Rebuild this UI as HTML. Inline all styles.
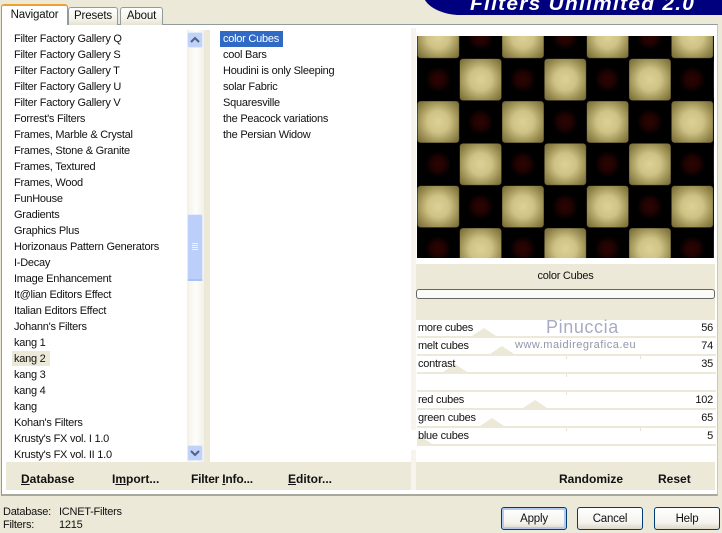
<!DOCTYPE html>
<html><head><meta charset="utf-8">
<style>
html,body{margin:0;padding:0}
body{width:722px;height:532px;position:relative;overflow:hidden;background:#ece9d8;font-family:"Liberation Sans",sans-serif;font-size:11px;color:#111}
.a{position:absolute}
.t{position:absolute;white-space:nowrap;line-height:16px;height:16px;font-size:11px;letter-spacing:-.25px}
.tab{position:absolute;box-sizing:border-box;border:1px solid #919b9c;border-bottom:0;border-radius:3px 3px 0 0;text-align:center;background:linear-gradient(#fff,#f3f1e7 70%,#e4e1d3);font-size:11.5px;letter-spacing:-.15px}
.ln{position:absolute;left:417px;width:299px;height:2px;background:#ece9d8}
.tr{position:absolute;width:0;height:0;border-left:12px solid transparent;border-right:12px solid transparent;border-bottom:8px solid #ece9d8}
.tk{position:absolute;width:1px;height:3px;background:#e6e3d6}
.b{position:absolute;font-weight:bold;font-size:12px;line-height:16px;white-space:nowrap}
.btn{position:absolute;top:507px;width:66px;height:23px;box-sizing:border-box;border:1px solid #003c74;border-radius:3px;background:linear-gradient(#fff,#f4f3ee 70%,#dcd8c8);text-align:center;line-height:22px;font-size:11.5px;letter-spacing:-.2px}
</style></head><body>

<!-- banner -->
<div class="a" style="left:423px;top:-30px;width:320px;height:45px;background:#00007f;border-bottom-left-radius:38px 22px;overflow:hidden"></div>
<div class="a" style="left:470px;top:-5px;font:italic bold 19px/20px 'Liberation Sans',sans-serif;color:#fff;letter-spacing:1.15px;white-space:nowrap;transform:scaleX(1.1);transform-origin:0 0">Filters Unlimited 2.0</div>

<!-- panel -->
<div class="a" style="left:1px;top:24px;width:717px;height:472px;box-sizing:border-box;background:#fff;border:1px solid #919b9c;border-right:1px solid #c8c8c0;border-bottom:2px solid #a8a89c"></div>

<!-- tabs -->
<div class="tab" style="left:68px;top:7px;width:50px;height:18px;line-height:17px">Presets</div>
<div class="tab" style="left:120px;top:7px;width:43px;height:18px;line-height:17px">About</div>
<div class="tab" style="left:1px;top:4px;width:67px;height:21px;line-height:19px;background:#fff;border-top:2px solid #f0a030;border-bottom:0">Navigator</div>

<!-- strips -->
<div class="a" style="left:204px;top:30px;width:6px;height:432px;background:#ece9d8"></div>
<div class="a" style="left:411px;top:28px;width:5px;height:462px;background:#f6f4ec"></div>
<div class="a" style="left:6px;top:462px;width:405px;height:28px;background:#ece9d8"></div>
<div class="a" style="left:416px;top:462px;width:299px;height:28px;background:#ece9d8"></div>

<!-- kang2 highlight -->
<div class="a" style="left:12px;top:351px;width:38px;height:15px;background:#ece9d8"></div>

<!-- left list -->
<div class="t" style="left:14px;top:31px">Filter Factory Gallery Q</div>
<div class="t" style="left:14px;top:47px">Filter Factory Gallery S</div>
<div class="t" style="left:14px;top:63px">Filter Factory Gallery T</div>
<div class="t" style="left:14px;top:79px">Filter Factory Gallery U</div>
<div class="t" style="left:14px;top:95px">Filter Factory Gallery V</div>
<div class="t" style="left:14px;top:111px">Forrest's Filters</div>
<div class="t" style="left:14px;top:127px">Frames, Marble &amp; Crystal</div>
<div class="t" style="left:14px;top:143px">Frames, Stone &amp; Granite</div>
<div class="t" style="left:14px;top:159px">Frames, Textured</div>
<div class="t" style="left:14px;top:175px">Frames, Wood</div>
<div class="t" style="left:14px;top:191px">FunHouse</div>
<div class="t" style="left:14px;top:207px">Gradients</div>
<div class="t" style="left:14px;top:223px">Graphics Plus</div>
<div class="t" style="left:14px;top:239px">Horizonaus Pattern Generators</div>
<div class="t" style="left:14px;top:255px">I-Decay</div>
<div class="t" style="left:14px;top:271px">Image Enhancement</div>
<div class="t" style="left:14px;top:287px">It@lian Editors Effect</div>
<div class="t" style="left:14px;top:303px">Italian Editors Effect</div>
<div class="t" style="left:14px;top:319px">Johann's Filters</div>
<div class="t" style="left:14px;top:335px">kang 1</div>
<div class="t" style="left:14px;top:351px">kang 2</div>
<div class="t" style="left:14px;top:367px">kang 3</div>
<div class="t" style="left:14px;top:383px">kang 4</div>
<div class="t" style="left:14px;top:399px">kang</div>
<div class="t" style="left:14px;top:415px">Kohan's Filters</div>
<div class="t" style="left:14px;top:431px">Krusty's FX vol. I 1.0</div>
<div class="t" style="left:14px;top:447px">Krusty's FX vol. II 1.0</div>

<!-- scrollbar -->
<div class="a" style="left:187px;top:30px;width:17px;height:432px;background:linear-gradient(90deg,#f3f1e7,#fdfdfa 50%,#f3f1e7)"></div>
<div class="a" style="left:187px;top:32px;width:16px;height:16px;box-sizing:border-box;background:#c1d2f8;border:1px solid #e4ecfb;border-radius:2px"></div>
<svg class="a" style="left:187px;top:32px" width="16" height="16"><path d="M4 10 L8 6 L12 10" fill="none" stroke="#4d6185" stroke-width="2"/></svg>
<div class="a" style="left:187px;top:214px;width:16px;height:67px;box-sizing:border-box;background:#bccffa;border:1px solid #e6ecfc;border-bottom:2px solid #a9c0f5;border-radius:2px"></div>
<svg class="a" style="left:187px;top:214px" width="16" height="67"><path d="M5 29.5H11M5 31.5H11M5 33.5H11M5 35.5H11" stroke="#eef3fe" stroke-width="1"/></svg>
<div class="a" style="left:187px;top:445px;width:16px;height:16px;box-sizing:border-box;background:#c1d2f8;border:1px solid #e4ecfb;border-radius:2px"></div>
<svg class="a" style="left:187px;top:445px" width="16" height="16"><path d="M4 6 L8 10 L12 6" fill="none" stroke="#4d6185" stroke-width="2"/></svg>

<!-- middle list -->
<div class="a" style="left:220px;top:31px;width:63px;height:16px;background:#316ac5"></div>
<div class="t" style="left:223px;top:31px;color:#fff">color Cubes</div>
<div class="t" style="left:223px;top:47px">cool Bars</div>
<div class="t" style="left:223px;top:63px">Houdini is only Sleeping</div>
<div class="t" style="left:223px;top:79px">solar Fabric</div>
<div class="t" style="left:223px;top:95px">Squaresville</div>
<div class="t" style="left:223px;top:111px">the Peacock variations</div>
<div class="t" style="left:223px;top:127px">the Persian Widow</div>

<!-- preview -->
<svg class="a" style="left:417px;top:36px" width="297" height="222" viewBox="0 0 297 222">
<defs>
<radialGradient id="l" cx="50%" cy="50%" r="66%"><stop offset="0" stop-color="#ddd197"/><stop offset=".4" stop-color="#cfc285"/><stop offset=".75" stop-color="#9c9054"/><stop offset="1" stop-color="#7a6f3a"/></radialGradient>
<radialGradient id="d" cx="50%" cy="50%" r="50%"><stop offset="0" stop-color="#2a0403"/><stop offset=".3" stop-color="#220302"/><stop offset=".62" stop-color="#000"/><stop offset="1" stop-color="#000"/></radialGradient>
<pattern id="p" x="0" y="-20" width="84.67" height="84.67" patternUnits="userSpaceOnUse">
<rect width="84.67" height="84.67" fill="#000"/>
<rect x="0.5" y="0.5" width="41.6" height="41.6" rx="3" fill="url(#l)"/>
<rect x="42.8" y="42.8" width="41.6" height="41.6" rx="3" fill="url(#l)"/>
<rect x="42.3" y="0" width="42.3" height="42.3" fill="url(#d)"/>
<rect x="0" y="42.3" width="42.3" height="42.3" fill="url(#d)"/>
</pattern>
</defs>
<rect width="297" height="222" fill="url(#p)"/>
</svg>

<!-- name + bar -->
<div class="a" style="left:416px;top:264px;width:299px;height:56px;background:#ece9d8"></div>
<div class="t" style="left:416px;top:268px;width:299px;text-align:center">color Cubes</div>
<div class="a" style="left:416px;top:289px;width:299px;height:10px;box-sizing:border-box;border:1px solid #666;border-radius:3px;background:#fafaf6"></div>

<!-- params -->
<div class="tr" style="left:472px;top:328px"></div>
<div class="tr" style="left:490px;top:346px"></div>
<div class="tr" style="left:443px;top:364px"></div>
<div class="tr" style="left:523px;top:400px"></div>
<div class="tr" style="left:480px;top:418px"></div>
<div class="tr" style="left:408px;top:436px"></div>
<div class="a" style="left:400px;top:430px;width:17px;height:20px;background:#fff"></div>
<div class="ln" style="top:336px"></div>
<div class="ln" style="top:354px"></div>
<div class="ln" style="top:372px"></div>
<div class="ln" style="top:390px"></div>
<div class="ln" style="top:408px"></div>
<div class="ln" style="top:426px"></div>
<div class="ln" style="top:444px"></div>
<div class="tk" style="left:566px;top:356px"></div>
<div class="tk" style="left:640px;top:356px"></div>
<div class="tk" style="left:566px;top:374px"></div>
<div class="tk" style="left:566px;top:392px"></div>
<div class="tk" style="left:566px;top:428px"></div>
<div class="tk" style="left:640px;top:428px"></div>

<div class="t" style="left:418px;top:320px">more cubes</div><div class="t" style="right:9px;top:320px">56</div>
<div class="t" style="left:418px;top:338px">melt cubes</div><div class="t" style="right:9px;top:338px">74</div>
<div class="t" style="left:418px;top:356px">contrast</div><div class="t" style="right:9px;top:356px">35</div>
<div class="t" style="left:418px;top:392px">red cubes</div><div class="t" style="right:9px;top:392px">102</div>
<div class="t" style="left:418px;top:410px">green cubes</div><div class="t" style="right:9px;top:410px">65</div>
<div class="t" style="left:418px;top:428px">blue cubes</div><div class="t" style="right:9px;top:428px">5</div>

<!-- watermark -->
<div class="a" style="left:546px;top:317px;font-size:18px;line-height:20px;color:#a9abc6;letter-spacing:.6px;white-space:nowrap">Pinuccia</div>
<div class="a" style="left:515px;top:338px;font-size:11px;line-height:14px;color:#9496a8;letter-spacing:.5px;white-space:nowrap">www.maidiregrafica.eu</div>

<!-- bottom actions -->
<div class="b" style="left:21px;top:471px"><u>D</u>atabase</div>
<div class="b" style="left:112px;top:471px">I<u>m</u>port...</div>
<div class="b" style="left:191px;top:471px;letter-spacing:-.2px">Filter <u>I</u>nfo...</div>
<div class="b" style="left:288px;top:471px"><u>E</u>ditor...</div>
<div class="b" style="left:559px;top:471px">Randomize</div>
<div class="b" style="left:658px;top:471px">Reset</div>

<!-- status -->
<div class="t" style="left:3px;top:504px">Database:</div>
<div class="t" style="left:59px;top:504px">ICNET-Filters</div>
<div class="t" style="left:3px;top:517px">Filters:</div>
<div class="t" style="left:59px;top:517px">1215</div>

<!-- buttons -->
<div class="btn" style="left:501px;box-shadow:inset 0 0 0 2px #b4c9ef">Apply</div>
<div class="btn" style="left:577px">Cancel</div>
<div class="btn" style="left:654px">Help</div>

</body></html>
